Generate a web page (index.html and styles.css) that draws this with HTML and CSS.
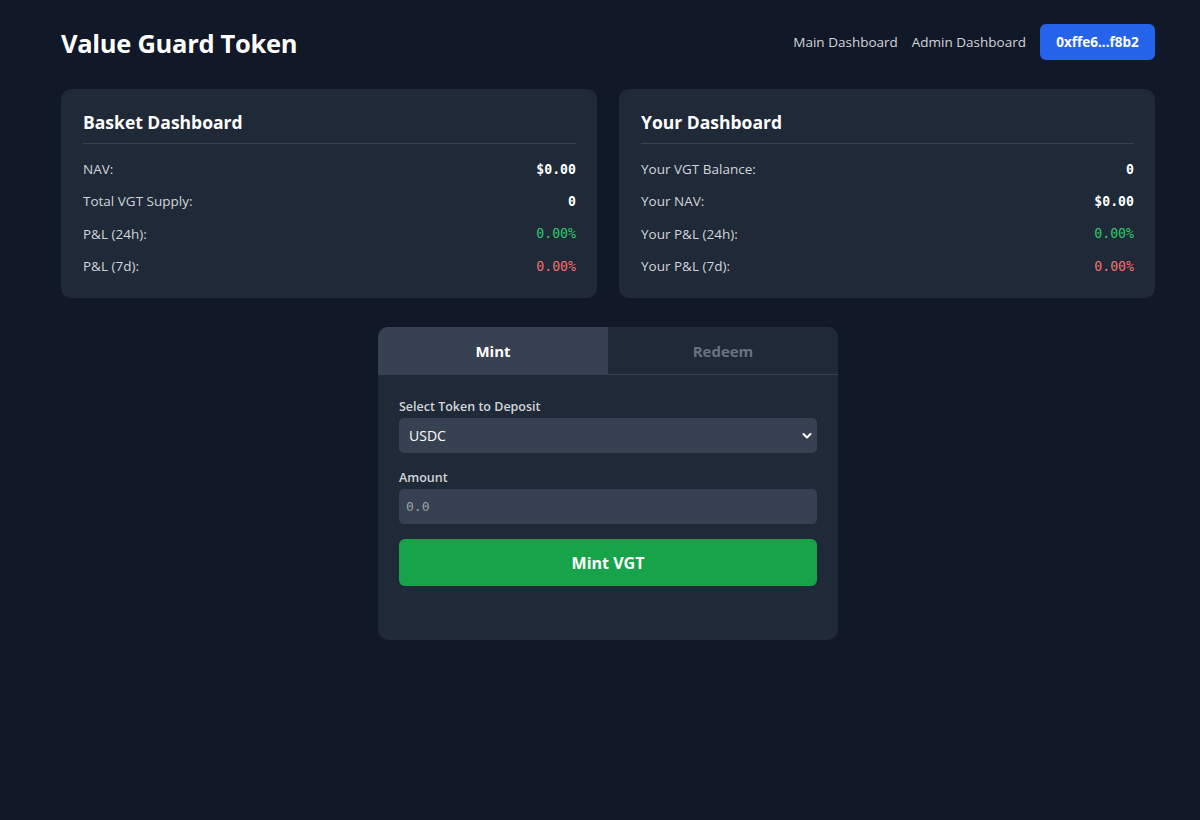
FILE: index.html
```html
<!DOCTYPE html>
<html lang="en">
<head>
<meta charset="utf-8">
<title>Value Guard Token</title>
<link rel="stylesheet" href="styles.css">
</head>
<body>
<div class="container">
  <header class="header">
    <h1 class="logo">Value Guard Token</h1>
    <nav class="nav">
      <a class="nav-link" href="#">Main Dashboard</a>
      <a class="nav-link" href="#">Admin Dashboard</a>
      <button class="wallet-btn">0xffe6...f8b2</button>
    </nav>
  </header>

  <section class="dashboards">
    <div class="card">
      <h2 class="card-title">Basket Dashboard</h2>
      <div class="stat"><span class="stat-label">NAV:</span><span class="stat-value">$0.00</span></div>
      <div class="stat"><span class="stat-label">Total VGT Supply:</span><span class="stat-value">0</span></div>
      <div class="stat"><span class="stat-label">P&amp;L (24h):</span><span class="stat-value positive">0.00%</span></div>
      <div class="stat"><span class="stat-label">P&amp;L (7d):</span><span class="stat-value negative">0.00%</span></div>
    </div>
    <div class="card">
      <h2 class="card-title">Your Dashboard</h2>
      <div class="stat"><span class="stat-label">Your VGT Balance:</span><span class="stat-value">0</span></div>
      <div class="stat"><span class="stat-label">Your NAV:</span><span class="stat-value">$0.00</span></div>
      <div class="stat"><span class="stat-label">Your P&amp;L (24h):</span><span class="stat-value positive">0.00%</span></div>
      <div class="stat"><span class="stat-label">Your P&amp;L (7d):</span><span class="stat-value negative">0.00%</span></div>
    </div>
  </section>

  <section class="action-card">
    <div class="tabs">
      <button class="tab active">Mint</button>
      <button class="tab">Redeem</button>
    </div>
    <div class="action-body">
      <label class="field-label" for="token">Select Token to Deposit</label>
      <div class="select-wrap">
        <select id="token" class="field-input select">
          <option>USDC</option>
        </select>
        <svg class="chevron" width="10" height="8" viewBox="0 0 10 8"><path d="M1.5 2l3.5 3.5L8.5 2" fill="none" stroke="#ffffff" stroke-width="2" stroke-linecap="round" stroke-linejoin="round"/></svg>
      </div>
      <label class="field-label" for="amount">Amount</label>
      <input id="amount" class="field-input amount" type="text" placeholder="0.0">
      <button class="submit-btn">Mint VGT</button>
    </div>
  </section>
</div>
</body>
</html>
```

FILE: styles.css
```css
* { box-sizing: border-box; }

html, body {
  margin: 0;
  padding: 0;
  background: #111827;
  color: #f9fafb;
  font-family: "Open Sans", "Noto Sans", "Liberation Sans", sans-serif;
}

.container {
  width: 1094px;
  margin-left: 61px;
  padding-top: 24px;
}

.header {
  display: flex;
  align-items: center;
  justify-content: space-between;
  height: 36px;
}

.logo {
  margin: 0;
  font-size: 25.5px;
  font-weight: 700;
  color: #ffffff;
  letter-spacing: -0.3px;
  position: relative;
  top: 1px;
}

.nav {
  display: flex;
  align-items: center;
  gap: 14px;
}

.nav-link {
  color: #d1d5db;
  text-decoration: none;
  font-size: 13.5px;
}

.wallet-btn {
  background: #2563eb;
  color: #ffffff;
  border: none;
  border-radius: 6px;
  height: 36px;
  width: 115px;
  font-family: inherit;
  font-size: 13.5px;
  font-weight: 700;
}

.dashboards {
  display: grid;
  grid-template-columns: 1fr 1fr;
  gap: 22px;
  margin-top: 29px;
}

.card {
  background: #1f2937;
  border-radius: 10px;
  padding: 21px 21px 16px 22px;
}

.card-title {
  margin: 0;
  font-size: 17.5px;
  font-weight: 700;
  color: #ffffff;
  padding-bottom: 9px;
  border-bottom: 1px solid #374151;
  line-height: 24px;
}

.card-title + .stat { margin-top: 9px; }

.stat {
  display: flex;
  justify-content: space-between;
  align-items: center;
  height: 32.3px;
}

.stat-label {
  font-size: 13.5px;
  color: #d1d5db;
}

.stat-value {
  font-family: "DejaVu Sans Mono", "Liberation Mono", monospace;
  font-size: 13.2px;
  font-weight: 600;
  color: #ffffff;
}

.stat-value.positive { color: #2fcc6b; font-weight: 400; }
.stat-value.negative { color: #f87171; font-weight: 400; }

.action-card {
  width: 460px;
  margin: 29px auto 0;
  background: #1f2937;
  border-radius: 10px;
  overflow: hidden;
}

.tabs {
  display: flex;
  border-bottom: 1px solid #374151;
}

.tab {
  flex: 1;
  height: 47px;
  border: none;
  background: #1f2937;
  color: #6b7280;
  font-family: inherit;
  font-size: 15px;
  font-weight: 700;
}

.tab.active {
  background: #374151;
  color: #ffffff;
}

.action-body {
  display: flex;
  flex-direction: column;
  padding: 24px 21px 54px;
}

.field-label {
  font-size: 12.5px;
  font-weight: 600;
  color: #d1d5db;
  margin-bottom: 3px;
  line-height: 16px;
}

.select-wrap {
  position: relative;
  margin-bottom: 17px;
}

.field-input {
  width: 100%;
  height: 35px;
  border: none;
  border-radius: 5px;
  background: #374151;
  color: #ffffff;
  padding: 0 10px;
  font-size: 14px;
  outline: none;
  display: block;
}

.select {
  appearance: none;
  -webkit-appearance: none;
  font-family: inherit;
  font-size: 14px;
}

.chevron {
  position: absolute;
  right: 5px;
  top: 14px;
}

.amount {
  font-family: "DejaVu Sans Mono", "Liberation Mono", monospace;
  font-size: 13px;
  padding: 0 7px;
}

.amount::placeholder { color: #9ca3af; }

.submit-btn {
  margin-top: 15px;
  height: 47px;
  border: none;
  border-radius: 6px;
  background: #16a34a;
  color: #ffffff;
  font-family: inherit;
  font-size: 16px;
  font-weight: 700;
}
```
